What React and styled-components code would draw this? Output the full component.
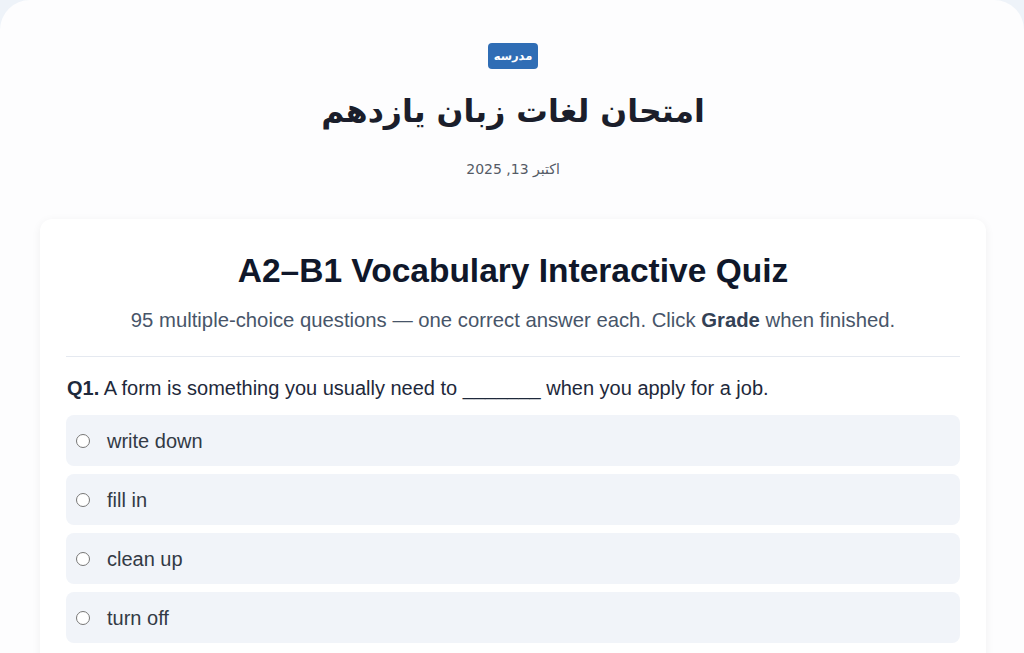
import React from 'react';
import styled, { createGlobalStyle } from 'styled-components';

const GlobalStyle = createGlobalStyle`
  html, body {
    margin: 0;
    padding: 0;
    background: #eef3f9;
  }
  body {
    font-family: "Liberation Sans", Arial, sans-serif;
  }
`;

const Page = styled.div`
  background: #fdfdfe;
  border-radius: 30px 30px 0 0;
  min-height: 653px;
  padding: 43px 38px 0 40px;
  box-sizing: border-box;
`;

const Header = styled.header`
  display: flex;
  flex-direction: column;
  align-items: center;
  direction: rtl;
  font-family: "DejaVu Sans", "Noto Sans", sans-serif;
`;

const Badge = styled.span`
  background: #2f6db5;
  color: #fff;
  font-size: 11.5px;
  font-weight: 700;
  padding: 4px 6px;
  border-radius: 4px;
  line-height: 18px;
`;

const Title = styled.h1`
  margin: 18px 0 0;
  font-size: 31.5px;
  font-weight: 700;
  color: #1b1e2b;
  line-height: 48px;
`;

const DateLine = styled.div`
  margin-top: 26px;
  font-size: 14px;
  color: #555b66;
`;

const Card = styled.section`
  margin-top: 42px;
  background: #fff;
  border-radius: 12px;
  box-shadow: 0 2px 10px rgba(15, 23, 42, 0.06);
  padding: 30px 26px 26px;
`;

const QuizTitle = styled.h2`
  margin: 0;
  text-align: center;
  font-size: 33.5px;
  font-weight: 700;
  color: #0f172a;
  line-height: 44px;
`;

const Subtitle = styled.p`
  margin: 13px 0 0;
  text-align: center;
  font-size: 20.3px;
  color: #475569;
  line-height: 28px;

  b { color: #334155; }
`;

const Divider = styled.hr`
  border: none;
  border-top: 1px solid #e5e9f0;
  margin: 22px 0 0;
`;

const Question = styled.div`
  margin-top: 17px;
`;

const Prompt = styled.p`
  margin: 0 0 13px 1px;
  font-size: 20px;
  color: #1e293b;
  line-height: 28px;

  b { color: #1e293b; }
`;

const Options = styled.div`
  display: flex;
  flex-direction: column;
  gap: 8px;
`;

const Option = styled.label`
  display: flex;
  align-items: center;
  gap: 17px;
  height: 51px;
  padding: 0 10px;
  background: #f1f4f9;
  border-radius: 8px;
  font-size: 20px;
  color: #333a45;
  cursor: pointer;
`;

const Radio = styled.input`
  width: 14px;
  height: 14px;
  margin: 0;
`;

const OptionText = styled.span`
  margin-top: 1px;
`;

const options = ['write down', 'fill in', 'clean up', 'turn off'];

export default function App() {
  return (
    <>
      <GlobalStyle />
      <Page>
        <Header>
          <Badge>مدرسه</Badge>
          <Title>امتحان لغات زبان یازدهم</Title>
          <DateLine>اکتبر 13, 2025</DateLine>
        </Header>
        <Card>
          <QuizTitle>A2–B1 Vocabulary Interactive Quiz</QuizTitle>
          <Subtitle>
            95 multiple-choice questions — one correct answer each. Click <b>Grade</b> when finished.
          </Subtitle>
          <Divider />
          <Question>
            <Prompt>
              <b>Q1.</b> A form is something you usually need to _______ when you apply for a job.
            </Prompt>
            <Options>
              {options.map((o) => (
                <Option key={o}>
                  <Radio type="radio" name="q1" />
                  <OptionText>{o}</OptionText>
                </Option>
              ))}
            </Options>
          </Question>
        </Card>
      </Page>
    </>
  );
}
